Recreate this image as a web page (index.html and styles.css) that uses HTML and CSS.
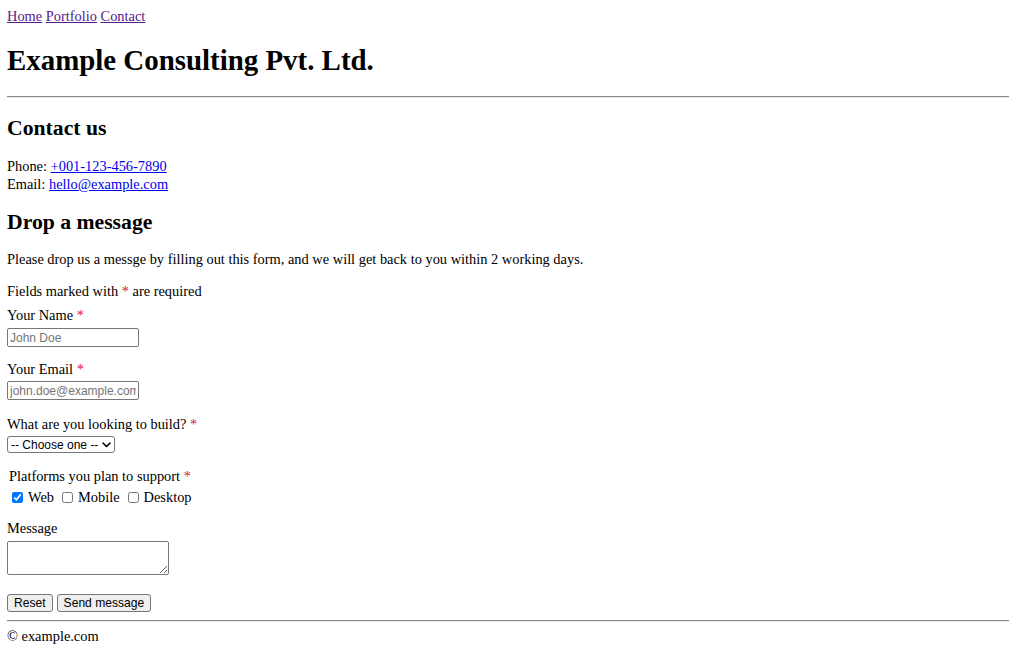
FILE: index.html
```html
<!DOCTYPE html>
<html lang="en">
<head>
<meta charset="utf-8">
<title>Example Consulting Pvt. Ltd.</title>
<link rel="stylesheet" href="styles.css">
</head>
<body>
<header class="site-header">
  <nav class="nav"><a class="visited" href="#">Home</a> <a class="visited" href="#">Portfolio</a> <a class="visited" href="#">Contact</a></nav>
  <h1 class="title">Example Consulting Pvt. Ltd.</h1>
</header>
<hr class="rule">
<main>
  <h2 class="section-title">Contact us</h2>
  <p class="contact">Phone: <a class="link" href="#">+001-123-456-7890</a><br>Email: <a class="link" href="#">hello@example.com</a></p>
  <h2 class="section-title second">Drop a message</h2>
  <p class="intro">Please drop us a messge by filling out this form, and we will get back to you within 2 working days.</p>
  <form class="form">
    <p class="note">Fields marked with <span class="req">*</span> are required</p>
    <div class="field first">
      <label class="label" for="name">Your Name <span class="req">*</span></label>
      <input class="text-input" id="name" type="text" placeholder="John Doe">
    </div>
    <div class="field">
      <label class="label" for="email">Your Email <span class="req">*</span></label>
      <input class="text-input" id="email" type="email" placeholder="john.doe@example.com">
    </div>
    <div class="field build">
      <label class="label" for="build">What are you looking to build? <span class="req">*</span></label>
      <div class="select-wrap">
        <select class="select" id="build"><option>-- Choose one --</option></select>
        <svg class="chevron" width="9" height="6" viewBox="0 0 9 6" aria-hidden="true"><path d="M1 1 L4.5 4.5 L8 1" fill="none" stroke="#000" stroke-width="1.6" stroke-linecap="round" stroke-linejoin="round"/></svg>
      </div>
    </div>
    <fieldset class="platforms">
      <legend class="legend">Platforms you plan to support <span class="req">*</span></legend>
      <div class="checks">
        <label class="check"><input class="checkbox" type="checkbox" checked> Web</label>
        <label class="check"><input class="checkbox" type="checkbox"> Mobile</label>
        <label class="check"><input class="checkbox" type="checkbox"> Desktop</label>
      </div>
    </fieldset>
    <div class="field message">
      <label class="label" for="msg">Message</label>
      <textarea class="textarea" id="msg"></textarea>
    </div>
    <div class="buttons">
      <button class="btn" type="reset">Reset</button>
      <button class="btn" type="submit">Send message</button>
    </div>
  </form>
</main>
<hr class="rule footer-rule">
<footer class="footer">© example.com</footer>
</body>
</html>
```

FILE: styles.css
```css
html, body {
  background: #fff;
}
body {
  margin: 8px 0 8px 7px;
  font-family: "Liberation Serif", "Times New Roman", serif;
  font-size: 14.4px;
  line-height: 18px;
  color: #000;
}
a {
  color: #0000ee;
}
a.visited {
  color: #551a8b;
}
.nav {
  height: 16px;
  line-height: 16px;
}
.title {
  font-size: 28.9px;
  line-height: 36px;
  margin: 18px 0 0 0;
  font-weight: bold;
}
.rule {
  margin: 18px 0 0 0;
  border: none;
  border-top: 1px solid #8c8c8c;
  border-bottom: 1px solid #e6e6e6;
  height: 0;
}
.section-title {
  font-size: 21.7px;
  line-height: 26px;
  margin: 17px 0 0 0;
  font-weight: bold;
}
.contact {
  margin: 16px 0 0 0;
}
.section-title.second {
  margin-top: 16px;
}
.intro {
  margin: 15px 0 0 0;
}
.form {
  margin: 0;
}
.note {
  margin: 14px 0 0 0;
}
.req {
  color: #dc143c;
}
.field {
  margin-top: 13px;
}
.field.first {
  margin-top: 6px;
}
.field.first .text-input {
  margin-top: 4px;
}
.field.build {
  margin-top: 15px;
}
.label {
  display: block;
  line-height: 18px;
}
.text-input {
  display: block;
  box-sizing: border-box;
  width: 132px;
  height: 19px;
  margin: 3px 0 0 0;
  padding: 1px 2px;
  border: 1px solid #767676;
  border-radius: 2px;
  font-family: "Liberation Sans", Arial, sans-serif;
  font-size: 12px;
}
.text-input::placeholder {
  color: #757575;
}
.select-wrap {
  position: relative;
  width: 108px;
  margin: 3px 0 0 0;
}
.select {
  display: block;
  box-sizing: border-box;
  width: 108px;
  height: 17px;
  padding: 0 12px 0 3px;
  border: 1px solid #767676;
  border-radius: 3px;
  background: #fff;
  color: #000;
  font-family: "Liberation Sans", Arial, sans-serif;
  font-size: 12px;
  -webkit-appearance: none;
  appearance: none;
}
.chevron {
  position: absolute;
  right: 4px;
  top: 6px;
  pointer-events: none;
}
.platforms {
  margin: 14px 0 0 2px;
  padding: 0;
  border: none;
}
.legend {
  padding: 0;
}
.checks {
  display: flex;
  align-items: center;
  gap: 6px;
  margin-top: 3px;
  margin-left: 1px;
}
.check {
  display: flex;
  align-items: center;
  gap: 5px;
}
.checkbox {
  margin: 0 0 0 2px;
  width: 11px;
  height: 11px;
}
.field.message {
  margin-top: 13px;
}
.textarea {
  display: block;
  box-sizing: border-box;
  width: 162px;
  height: 34px;
  margin: 4px 0 0 0;
  border: 1px solid #767676;
  border-radius: 2px;
}
.buttons {
  display: flex;
  gap: 4px;
  margin-top: 19px;
}
.btn {
  box-sizing: border-box;
  height: 18px;
  padding: 0 6px;
  border: 1px solid #767676;
  border-radius: 3px;
  background: #efefef;
  font-family: "Liberation Sans", Arial, sans-serif;
  font-size: 12.1px;
  line-height: 16px;
}
.footer-rule {
  margin-top: 8px;
}
.footer {
  margin-top: 5px;
}
```
